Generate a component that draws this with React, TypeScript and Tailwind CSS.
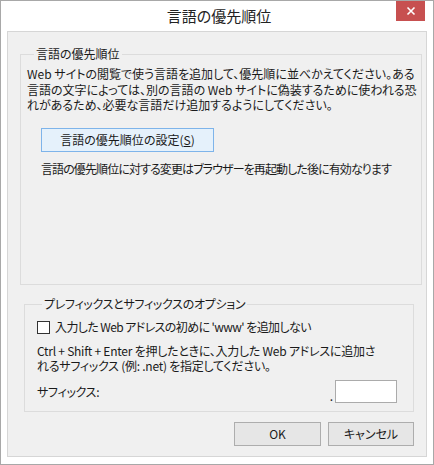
import React from "react";

const font = "[font-family:'Noto_Sans_CJK_JP','Noto_Sans',sans-serif] [font-feature-settings:'palt']";

export default function App() {
  return (
    <div className={`w-[434px] h-[465px] bg-white border border-[#a8a8a8] flex flex-col text-[12px] text-[#1a1a1a] ${font}`}>
      {/* title bar */}
      <div className="h-[30px] flex items-start relative">
        <div className="flex-1 h-[30px] flex items-center justify-center text-[15px] text-[#222] pl-[4px]">言語の優先順位</div>
        <button className="absolute right-[8px] top-0 w-[29px] h-[20px] bg-[#c75050] flex items-center justify-center">
          <svg width="10" height="10" viewBox="0 0 10 10">
            <path d="M1.5 1.5 L8.5 8.5 M8.5 1.5 L1.5 8.5" stroke="white" strokeWidth="1.6" />
          </svg>
        </button>
      </div>
      {/* client */}
      <div className="mx-[6px] mb-[7px] flex-1 bg-[#f0f0f0] border border-[#d6d6d6] flex flex-col pl-[12px] pr-[12px]">
        <fieldset className="mt-[14px] h-[239px] border border-[#dcdcdc] pl-[6px] pr-[4px]">
          <legend className="ml-[7px] px-[2px] leading-[16px]">言語の優先順位</legend>
          <div className="mt-[4px] leading-[15.5px] whitespace-nowrap">
            Web サイトの閲覧で使う言語を追加して、優先順に並べかえてください。ある
            <br />
            言語の文字によっては、別の言語の Web サイトに偽装するために使われる恐
            <br />
            れがあるため、必要な言語だけ追加するようにしてください。
          </div>
          <button className="mt-[15px] ml-[14px] w-[173px] h-[24px] bg-[#e5f1fb] border border-[#7eb4ea] flex items-center justify-center leading-[16px]">
            言語の優先順位の設定(<span className="underline">S</span>)
          </button>
          <div className="mt-[9px] ml-[14px] leading-[16px] whitespace-nowrap tracking-[-0.9px]">
            言語の優先順位に対する変更はブラウザーを再起動した後に有効なります
          </div>
        </fieldset>
        <fieldset className="mt-[11px] ml-[4px] h-[116px] border border-[#dcdcdc] pl-[12px] pr-[16px]">
          <legend className="ml-[5px] px-[2px] leading-[16px] tracking-[-0.3px]">プレフィックスとサフィックスのオプション</legend>
          <label className="mt-[7px] flex items-center gap-[5px] whitespace-nowrap leading-[16px]">
            <span className="w-[13px] h-[13px] border border-[#333] bg-white shrink-0"></span>
            <span className="tracking-[-0.6px]">入力した Web アドレスの初めに 'www' を追加しない</span>
          </label>
          <div className="mt-[8px] leading-[15px] whitespace-nowrap tracking-[-0.25px]">
            Ctrl + Shift + Enter を押したときに、入力した Web アドレスに追加さ
            <br />
            れるサフィックス (例: .net) を指定してください。
          </div>
          <div className="mt-[7px] flex items-center justify-between">
            <span className="leading-[16px] tracking-[-0.3px]">サフィックス:</span>
            <div className="flex items-end gap-[2px]">
              <span className="leading-[12px] mb-[1px]">.</span>
              <div className="w-[62px] h-[23px] bg-white border border-[#ababab]"></div>
            </div>
          </div>
        </fieldset>
        <div className="mt-[10px] flex justify-end gap-[7px]">
          <button className="w-[87px] h-[24px] bg-[#e6e6e6] border border-[#adadad] leading-[16px]">OK</button>
          <button className="w-[86px] h-[24px] bg-[#e6e6e6] border border-[#adadad] leading-[16px]">キャンセル</button>
        </div>
      </div>
    </div>
  );
}
